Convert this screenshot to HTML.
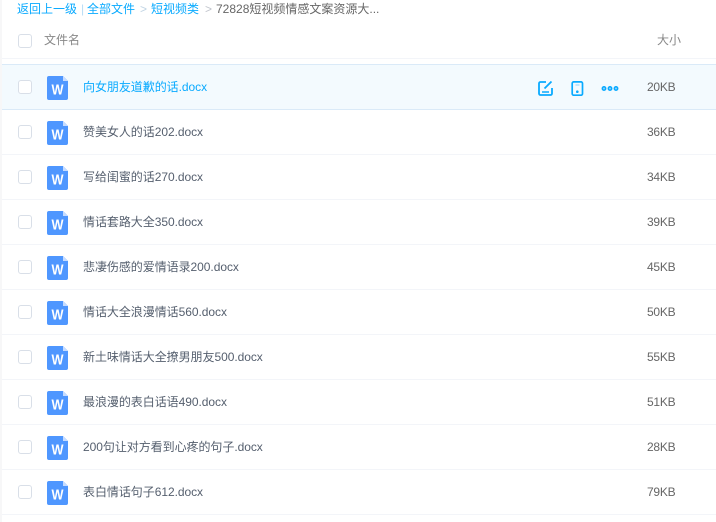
<!DOCTYPE html>
<html lang="zh">
<head>
<meta charset="utf-8">
<style>
html,body{margin:0;padding:0;background:#fff}
body{width:716px;height:522px;position:relative;overflow:hidden;font-family:"Liberation Sans","Noto Sans CJK SC",sans-serif;font-size:12px;color:#666}
.a{position:absolute;white-space:nowrap;line-height:18px}
.strip{position:absolute;left:0;top:0;width:2px;height:522px;background:#f7f7f8}
.cb{position:absolute;left:18px;width:12px;height:12px;border:1px solid #d9dfe8;border-radius:3px;background:#fff}
.line{position:absolute;left:2px;right:0;height:1px;background:#f3f5f9}
.ic{position:absolute;left:47px;width:21px;height:24px}
.name{left:83px;color:#555f6e;letter-spacing:-.05px}
.size{left:647px;color:#666;letter-spacing:-.02em}
</style>
</head>
<body>
<div class="strip"></div>

<div class="a" style="left:17px;top:0;color:#09aaff">返回上一级</div>
<div class="a" style="left:81px;top:0;color:#b8dcf5">|</div>
<div class="a" style="left:87px;top:0;color:#09aaff">全部文件</div>
<div class="a" style="left:140px;top:0;color:#c0d4e4">&gt;</div>
<div class="a" style="left:151px;top:0;color:#09aaff">短视频类</div>
<div class="a" style="left:205px;top:0;color:#c0c4cc">&gt;</div>
<div class="a" style="left:216px;top:0;color:#666">72828短视频情感文案资源大...</div>

<div class="cb" style="top:34px"></div>
<div class="a" style="left:44px;top:31px;color:#888">文件名</div>
<div class="a" style="left:657px;top:31px;color:#888">大小</div>
<div class="line" style="top:58px"></div>

<div style="position:absolute;left:2px;right:0;top:64px;height:46px;box-sizing:border-box;background:#f3fafe;border-top:1px solid #daeaf8;border-bottom:1px solid #daeaf8"></div>

<div class="cb" style="top:80px"></div>
<svg class="ic" style="top:76px" viewBox="0 0 21 24"><path d="M2 0H16L21 5V22a2 2 0 0 1-2 2H2a2 2 0 0 1-2-2V2a2 2 0 0 1 2-2Z" fill="#4f97ff"/><path d="M16 0L21 5H16Z" fill="#c6dcff"/><text x="4.500" y="18.500" textLength="12" lengthAdjust="spacingAndGlyphs" font-family="Liberation Sans" font-weight="bold" font-size="15" fill="#fff">W</text></svg>
<div class="a name" style="top:78px;color:#09aaff">向女朋友道歉的话.docx</div>
<svg style="position:absolute;left:538px;top:81px" width="15" height="15" viewBox="0 0 15 15" fill="none" stroke="#09aaff" stroke-width="1.800"><path d="M8 1H2.500A1.500 1.500 0 0 0 1 2.500V12.500A1.500 1.500 0 0 0 2.500 14H12.500A1.500 1.500 0 0 0 14 12.500V7"/><path d="M6.500 7.500L13.500 .5"/><path d="M4 11H11" stroke-width="1.500"/></svg>
<svg style="position:absolute;left:571px;top:81px" width="13" height="15" viewBox="0 0 13 15" fill="none" stroke="#09aaff" stroke-width="1.700"><rect x="1.200" y=".9" width="10.300" height="13.300" rx="1.500"/><path d="M4.500 4H8.500" stroke="#8fd4ff" stroke-width="1"/><circle cx="6.300" cy="10.700" r="1.300" fill="#09aaff" stroke="none"/></svg>
<svg style="position:absolute;left:601px;top:85px" width="18" height="7" viewBox="0 0 18 7" fill="#8fd4ff" stroke="#09aaff" stroke-width="1.500"><circle cx="3" cy="3.500" r="1.700"/><circle cx="9" cy="3.500" r="1.700"/><circle cx="15" cy="3.500" r="1.700"/></svg>
<div class="a size" style="top:78px">20KB</div>

<div class="cb" style="top:125px"></div>
<svg class="ic" style="top:121px" viewBox="0 0 21 24"><path d="M2 0H16L21 5V22a2 2 0 0 1-2 2H2a2 2 0 0 1-2-2V2a2 2 0 0 1 2-2Z" fill="#4f97ff"/><path d="M16 0L21 5H16Z" fill="#c6dcff"/><text x="4.500" y="18.500" textLength="12" lengthAdjust="spacingAndGlyphs" font-family="Liberation Sans" font-weight="bold" font-size="15" fill="#fff">W</text></svg>
<div class="a name" style="top:123px">赞美女人的话202.docx</div>
<div class="a size" style="top:123px">36KB</div>
<div class="line" style="top:154px"></div>

<div class="cb" style="top:170px"></div>
<svg class="ic" style="top:166px" viewBox="0 0 21 24"><path d="M2 0H16L21 5V22a2 2 0 0 1-2 2H2a2 2 0 0 1-2-2V2a2 2 0 0 1 2-2Z" fill="#4f97ff"/><path d="M16 0L21 5H16Z" fill="#c6dcff"/><text x="4.500" y="18.500" textLength="12" lengthAdjust="spacingAndGlyphs" font-family="Liberation Sans" font-weight="bold" font-size="15" fill="#fff">W</text></svg>
<div class="a name" style="top:168px">写给闺蜜的话270.docx</div>
<div class="a size" style="top:168px">34KB</div>
<div class="line" style="top:199px"></div>

<div class="cb" style="top:215px"></div>
<svg class="ic" style="top:211px" viewBox="0 0 21 24"><path d="M2 0H16L21 5V22a2 2 0 0 1-2 2H2a2 2 0 0 1-2-2V2a2 2 0 0 1 2-2Z" fill="#4f97ff"/><path d="M16 0L21 5H16Z" fill="#c6dcff"/><text x="4.500" y="18.500" textLength="12" lengthAdjust="spacingAndGlyphs" font-family="Liberation Sans" font-weight="bold" font-size="15" fill="#fff">W</text></svg>
<div class="a name" style="top:213px">情话套路大全350.docx</div>
<div class="a size" style="top:213px">39KB</div>
<div class="line" style="top:244px"></div>

<div class="cb" style="top:260px"></div>
<svg class="ic" style="top:256px" viewBox="0 0 21 24"><path d="M2 0H16L21 5V22a2 2 0 0 1-2 2H2a2 2 0 0 1-2-2V2a2 2 0 0 1 2-2Z" fill="#4f97ff"/><path d="M16 0L21 5H16Z" fill="#c6dcff"/><text x="4.500" y="18.500" textLength="12" lengthAdjust="spacingAndGlyphs" font-family="Liberation Sans" font-weight="bold" font-size="15" fill="#fff">W</text></svg>
<div class="a name" style="top:258px">悲凄伤感的爱情语录200.docx</div>
<div class="a size" style="top:258px">45KB</div>
<div class="line" style="top:289px"></div>

<div class="cb" style="top:305px"></div>
<svg class="ic" style="top:301px" viewBox="0 0 21 24"><path d="M2 0H16L21 5V22a2 2 0 0 1-2 2H2a2 2 0 0 1-2-2V2a2 2 0 0 1 2-2Z" fill="#4f97ff"/><path d="M16 0L21 5H16Z" fill="#c6dcff"/><text x="4.500" y="18.500" textLength="12" lengthAdjust="spacingAndGlyphs" font-family="Liberation Sans" font-weight="bold" font-size="15" fill="#fff">W</text></svg>
<div class="a name" style="top:303px">情话大全浪漫情话560.docx</div>
<div class="a size" style="top:303px">50KB</div>
<div class="line" style="top:334px"></div>

<div class="cb" style="top:350px"></div>
<svg class="ic" style="top:346px" viewBox="0 0 21 24"><path d="M2 0H16L21 5V22a2 2 0 0 1-2 2H2a2 2 0 0 1-2-2V2a2 2 0 0 1 2-2Z" fill="#4f97ff"/><path d="M16 0L21 5H16Z" fill="#c6dcff"/><text x="4.500" y="18.500" textLength="12" lengthAdjust="spacingAndGlyphs" font-family="Liberation Sans" font-weight="bold" font-size="15" fill="#fff">W</text></svg>
<div class="a name" style="top:348px">新土味情话大全撩男朋友500.docx</div>
<div class="a size" style="top:348px">55KB</div>
<div class="line" style="top:379px"></div>

<div class="cb" style="top:395px"></div>
<svg class="ic" style="top:391px" viewBox="0 0 21 24"><path d="M2 0H16L21 5V22a2 2 0 0 1-2 2H2a2 2 0 0 1-2-2V2a2 2 0 0 1 2-2Z" fill="#4f97ff"/><path d="M16 0L21 5H16Z" fill="#c6dcff"/><text x="4.500" y="18.500" textLength="12" lengthAdjust="spacingAndGlyphs" font-family="Liberation Sans" font-weight="bold" font-size="15" fill="#fff">W</text></svg>
<div class="a name" style="top:393px">最浪漫的表白话语490.docx</div>
<div class="a size" style="top:393px">51KB</div>
<div class="line" style="top:424px"></div>

<div class="cb" style="top:440px"></div>
<svg class="ic" style="top:436px" viewBox="0 0 21 24"><path d="M2 0H16L21 5V22a2 2 0 0 1-2 2H2a2 2 0 0 1-2-2V2a2 2 0 0 1 2-2Z" fill="#4f97ff"/><path d="M16 0L21 5H16Z" fill="#c6dcff"/><text x="4.500" y="18.500" textLength="12" lengthAdjust="spacingAndGlyphs" font-family="Liberation Sans" font-weight="bold" font-size="15" fill="#fff">W</text></svg>
<div class="a name" style="top:438px">200句让对方看到心疼的句子.docx</div>
<div class="a size" style="top:438px">28KB</div>
<div class="line" style="top:469px"></div>

<div class="cb" style="top:485px"></div>
<svg class="ic" style="top:481px" viewBox="0 0 21 24"><path d="M2 0H16L21 5V22a2 2 0 0 1-2 2H2a2 2 0 0 1-2-2V2a2 2 0 0 1 2-2Z" fill="#4f97ff"/><path d="M16 0L21 5H16Z" fill="#c6dcff"/><text x="4.500" y="18.500" textLength="12" lengthAdjust="spacingAndGlyphs" font-family="Liberation Sans" font-weight="bold" font-size="15" fill="#fff">W</text></svg>
<div class="a name" style="top:483px">表白情话句子612.docx</div>
<div class="a size" style="top:483px">79KB</div>
<div class="line" style="top:514px"></div>
</body>
</html>
